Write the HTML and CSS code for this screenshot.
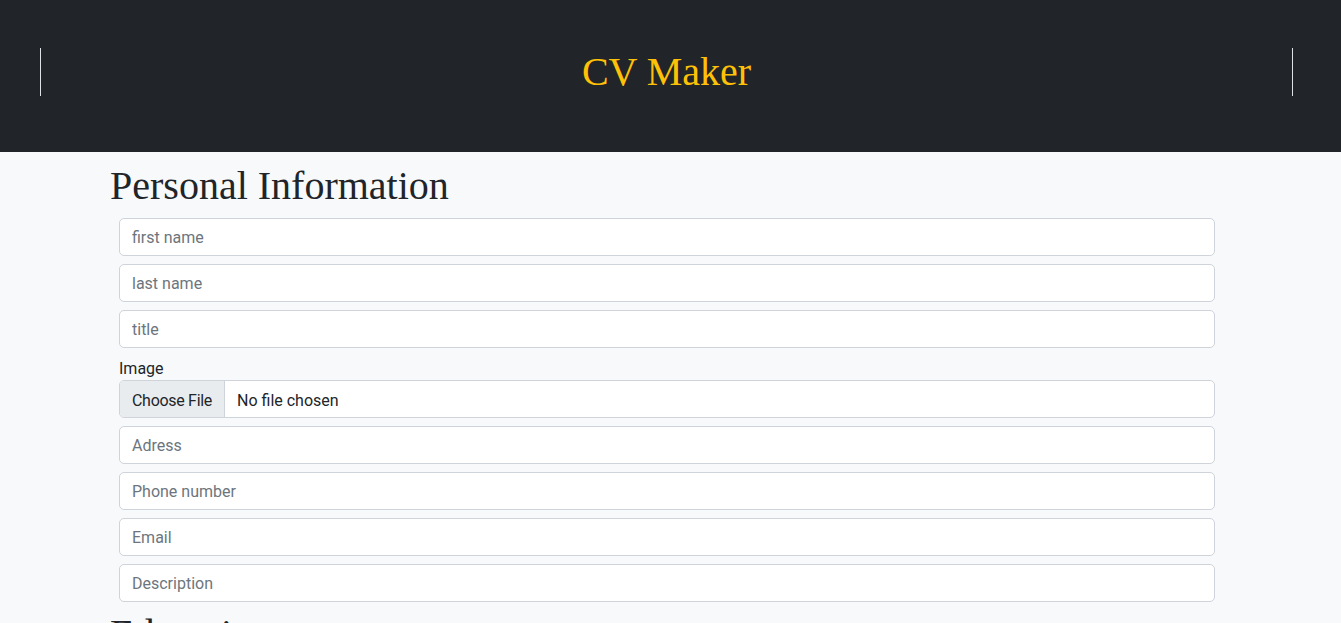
FILE: index.html
```html
<!DOCTYPE html>
<html lang="en">
<head>
<meta charset="utf-8">
<title>CV Maker</title>
<link rel="stylesheet" href="styles.css">
</head>
<body>
<header class="site-header">
  <div class="vr"></div>
  <h1 class="brand">CV Maker</h1>
  <div class="vr"></div>
</header>
<main class="container">
  <h1 class="section-title">Personal Information</h1>
  <form class="form">
    <input class="field" type="text" placeholder="first name">
    <input class="field" type="text" placeholder="last name">
    <input class="field" type="text" placeholder="title">
    <label class="label" for="img">Image</label>
    <input class="field file" id="img" type="file">
    <input class="field" type="text" placeholder="Adress">
    <input class="field" type="text" placeholder="Phone number">
    <input class="field" type="email" placeholder="Email">
    <input class="field" type="text" placeholder="Description">
  </form>
  <h1 class="section-title">Education</h1>
</main>
</body>
</html>
```
FILE: styles.css
```css
* { box-sizing: border-box; }
html, body { margin: 0; }
body {
  background: #f8f9fa;
  color: #212529;
  font-family: Roboto, "Noto Sans", sans-serif;
  font-size: 16px;
  line-height: 1.5;
}
.site-header {
  background: #212529;
  height: 152px;
  padding: 48px 48px 0 40px;
  display: flex;
  align-items: flex-start;
}
.vr {
  width: 1px;
  height: 48px;
  background: #dee2e6;
}
.brand {
  flex: 1;
  margin: 0;
  text-align: center;
  font-family: "Liberation Serif", serif;
  font-weight: 400;
  font-size: 40px;
  line-height: 48px;
  color: #ffc107;
}
.container {
  padding: 10px 0 0 110px;
  width: 1341px;
}
.section-title {
  margin: 0 0 8px 0;
  font-family: "Liberation Serif", serif;
  font-weight: 400;
  font-size: 40px;
  line-height: 48px;
  color: #212529;
}
.form {
  display: flex;
  flex-direction: column;
  padding-left: 9px;
  width: 1105px;
}
.field {
  display: block;
  width: 100%;
  height: 38px;
  margin: 0 0 8px 0;
  padding: 6px 12px;
  font-family: inherit;
  font-size: 16px;
  line-height: 24px;
  color: #212529;
  background: #fff;
  border: 1px solid #ced4da;
  border-radius: 5px;
  outline: none;
}
.field::placeholder { color: #6c757d; }
.label {
  display: block;
  height: 24px;
  padding-top: 2px;
  line-height: 22px;
  color: #212529;
}
.file { overflow: hidden; }
.file::file-selector-button {
  margin: -6px 12px -6px -12px;
  padding: 6px 12px;
  height: 38px;
  font-family: inherit;
  font-size: 16px;
  letter-spacing: -0.3px;
  color: #212529;
  background: #e9ecef;
  border: 0;
  border-right: 1px solid #ced4da;
  border-radius: 0;
}
```
